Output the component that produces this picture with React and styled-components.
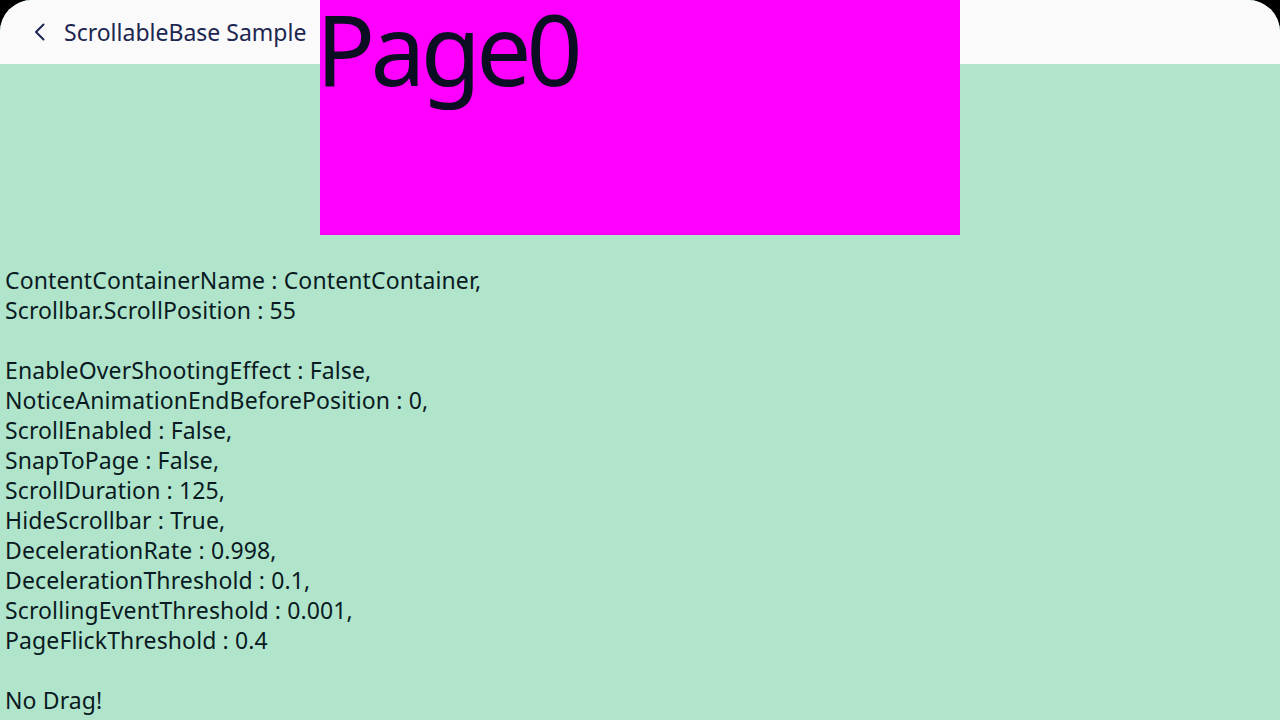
import React from "react";
import styled, { createGlobalStyle } from "styled-components";

const GlobalStyle = createGlobalStyle`
  html, body {
    margin: 0;
    padding: 0;
    background: #000;
    overflow: hidden;
  }
`;

const Screen = styled.div`
  width: 1280px;
  height: 720px;
  background: #b0e5cc;
  border-radius: 32px 32px 0 0;
  overflow: hidden;
  font-family: "Noto Sans", "Open Sans", sans-serif;
`;

const Header = styled.header`
  height: 64px;
  background: #fafafa;
  display: flex;
  align-items: center;
  padding-left: 32px;
  gap: 18px;
`;

const BackButton = styled.button`
  width: 14px;
  height: 20px;
  padding: 0;
  border: none;
  background: none;
  display: flex;
  align-items: center;
  justify-content: center;
  color: #1c2650;
`;

const Title = styled.h1`
  margin: 0;
  font-size: 23px;
  font-weight: 400;
  color: #1c2650;
`;

const PageBox = styled.div`
  position: relative;
  display: flow-root;
  margin: -64px 0 0 320px;
  width: 640px;
  height: 235px;
  background: #ff00ff;
  color: #0b0e22;
`;

const PageLabel = styled.span`
  display: block;
  font-size: 98px;
  line-height: normal;
  margin-top: -19px;
  letter-spacing: -4.8px;
  text-indent: -4px;
`;

const Info = styled.div`
  padding: 265px 0 0 5px;
  margin-top: -235px;
  font-size: 23px;
  line-height: 30px;
  letter-spacing: 0.12px;
  color: #0a1a22;
`;

const Line = styled.div`
  height: 30px;
  white-space: pre;
`;

const lines = [
  "ContentContainerName : ContentContainer,",
  "Scrollbar.ScrollPosition : 55",
  "",
  "EnableOverShootingEffect : False,",
  "NoticeAnimationEndBeforePosition : 0,",
  "ScrollEnabled : False,",
  "SnapToPage : False,",
  "ScrollDuration : 125,",
  "HideScrollbar : True,",
  "DecelerationRate : 0.998,",
  "DecelerationThreshold : 0.1,",
  "ScrollingEventThreshold : 0.001,",
  "PageFlickThreshold : 0.4",
  "",
  "No Drag!",
];

export default function App() {
  return (
    <>
      <GlobalStyle />
      <Screen>
        <Header>
          <BackButton aria-label="back">
            <svg width="14" height="20" viewBox="0 0 14 20" fill="none">
              <path
                d="M11.5 2.5 L4 10 L11.5 17.5"
                stroke="currentColor"
                strokeWidth="2"
                strokeLinecap="round"
                strokeLinejoin="round"
              />
            </svg>
          </BackButton>
          <Title>ScrollableBase Sample</Title>
        </Header>
        <PageBox>
          <PageLabel>Page0</PageLabel>
        </PageBox>
        <Info>
          {lines.map((t, i) => (
            <Line key={i}>{t}</Line>
          ))}
        </Info>
      </Screen>
    </>
  );
}
